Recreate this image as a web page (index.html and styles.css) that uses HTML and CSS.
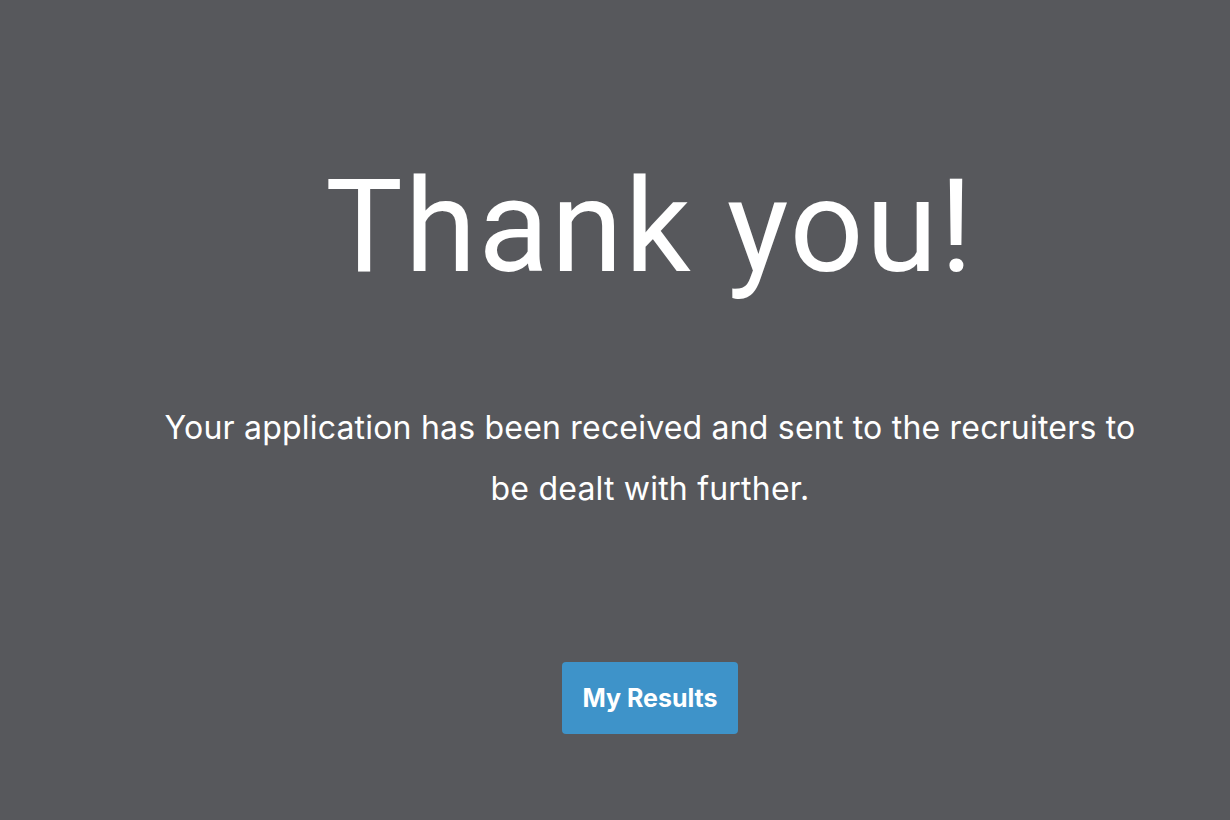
FILE: index.html
```html
<!DOCTYPE html>
<html lang="en">
<head>
    <meta charset="UTF-8">
    <meta name="viewport" content="width=device-width, initial-scale=1.0">
    <title>Thank you</title>
    <link rel="stylesheet" href="styles.css">
</head>
<body>
    <div class="thanks">
        <h1 class="thanks-title">Thank you!</h1>
        <p class="thanks-text">Your application has been received and sent to the recruiters to be dealt with further.</p>
        <button class="boto">My Results</button>
    </div>
</body>
</html>
```

FILE: styles.css
```css
html {
    height: 100%;
}

body {
    margin: 0;
    min-height: 100%;
    background-color: #57585c;
    font-family: 'Inter', 'Roboto', sans-serif;
    color: white;
}

.thanks {
    display: flex;
    flex-direction: column;
    align-items: center;
    padding: 162px 0 0 70px;
}

.thanks-title {
    font-family: 'Roboto', sans-serif;
    font-weight: 400;
    font-size: 130px;
    letter-spacing: 2px;
    line-height: 1;
    margin: 0;
}

.thanks-text {
    width: 1000px;
    margin: 105px 0 0 0;
    font-size: 32px;
    letter-spacing: 0.2px;
    line-height: 61px;
    text-align: center;
}

.boto {
    margin-top: 143px;
    width: 176px;
    height: 72px;
    border: none;
    border-radius: 4px;
    background-color: #3e93c9;
    color: white;
    font-family: 'Inter', 'Roboto', sans-serif;
    font-size: 25px;
    font-weight: 700;
    cursor: pointer;
}
```
